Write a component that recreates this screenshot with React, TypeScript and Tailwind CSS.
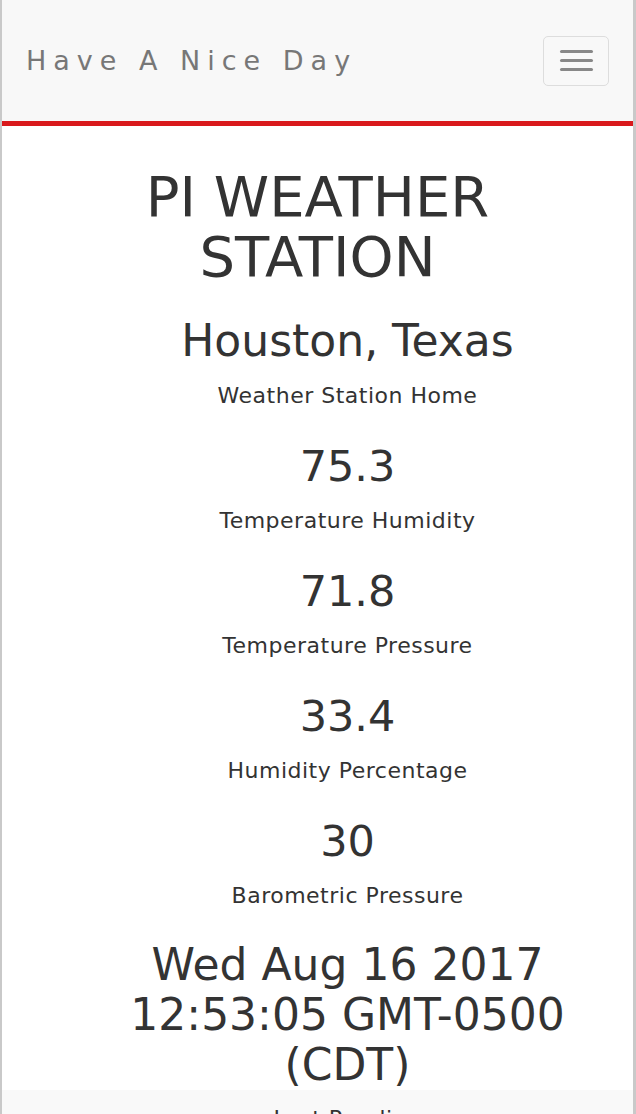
const readings = [
  { value: "75.3", label: "Temperature Humidity" },
  { value: "71.8", label: "Temperature Pressure" },
  { value: "33.4", label: "Humidity Percentage" },
  { value: "30", label: "Barometric Pressure" },
];

const App = () => {
  return (
    <div
      className="min-h-screen bg-white border-l-2 border-r-[3px] border-[#c9c9c9] text-[#333]"
      style={{ fontFamily: '"DejaVu Sans", sans-serif' }}
    >
      {/* Navbar */}
      <nav className="h-[126px] bg-[#f8f8f8] border-b-[5px] border-[#d9191c] flex items-center justify-between pl-6 pr-6">
        <a href="#" className="text-[27px] leading-none tracking-[7px] text-[#777]">
          Have A Nice Day
        </a>
        <button className="w-[66px] h-[50px] border border-[#ddd] rounded-[5px] flex flex-col items-center justify-center gap-[6px]">
          <span className="block w-[33px] h-[3px] rounded-sm bg-[#888]" />
          <span className="block w-[33px] h-[3px] rounded-sm bg-[#888]" />
          <span className="block w-[33px] h-[3px] rounded-sm bg-[#888]" />
        </button>
      </nav>

      {/* Station */}
      <main className="text-center">
        <h1 className="mt-[41px] mx-auto max-w-[440px] text-[56px] leading-[60px]">
          PI WEATHER STATION
        </h1>

        <div className="pl-[60px]">
          <h2 className="mt-[26px] text-[44px] leading-[56px]">Houston, Texas</h2>
          <p className="mt-[12px] text-[22px] leading-[30px] tracking-[0.5px]">Weather Station Home</p>

          {readings.map((r) => (
            <div key={r.label} className="mt-[30px]">
              <div className="text-[43px] leading-[50px]">{r.value}</div>
              <div className="mt-[15px] text-[22px] leading-[30px] tracking-[0.5px]">{r.label}</div>
            </div>
          ))}

          <div className="mt-[29px] text-[44px] leading-[50px] px-4">
            Wed Aug 16 2017 12:53:05 GMT-0500 (CDT)
          </div>
        </div>

        {/* Footer */}
        <footer className="bg-[#f9f9f9] pt-[14px] pb-10 pl-[60px]">
          <p className="text-[22px] leading-[30px] tracking-[0.5px]">Last Reading</p>
        </footer>
      </main>
    </div>
  );
};

export default App;
